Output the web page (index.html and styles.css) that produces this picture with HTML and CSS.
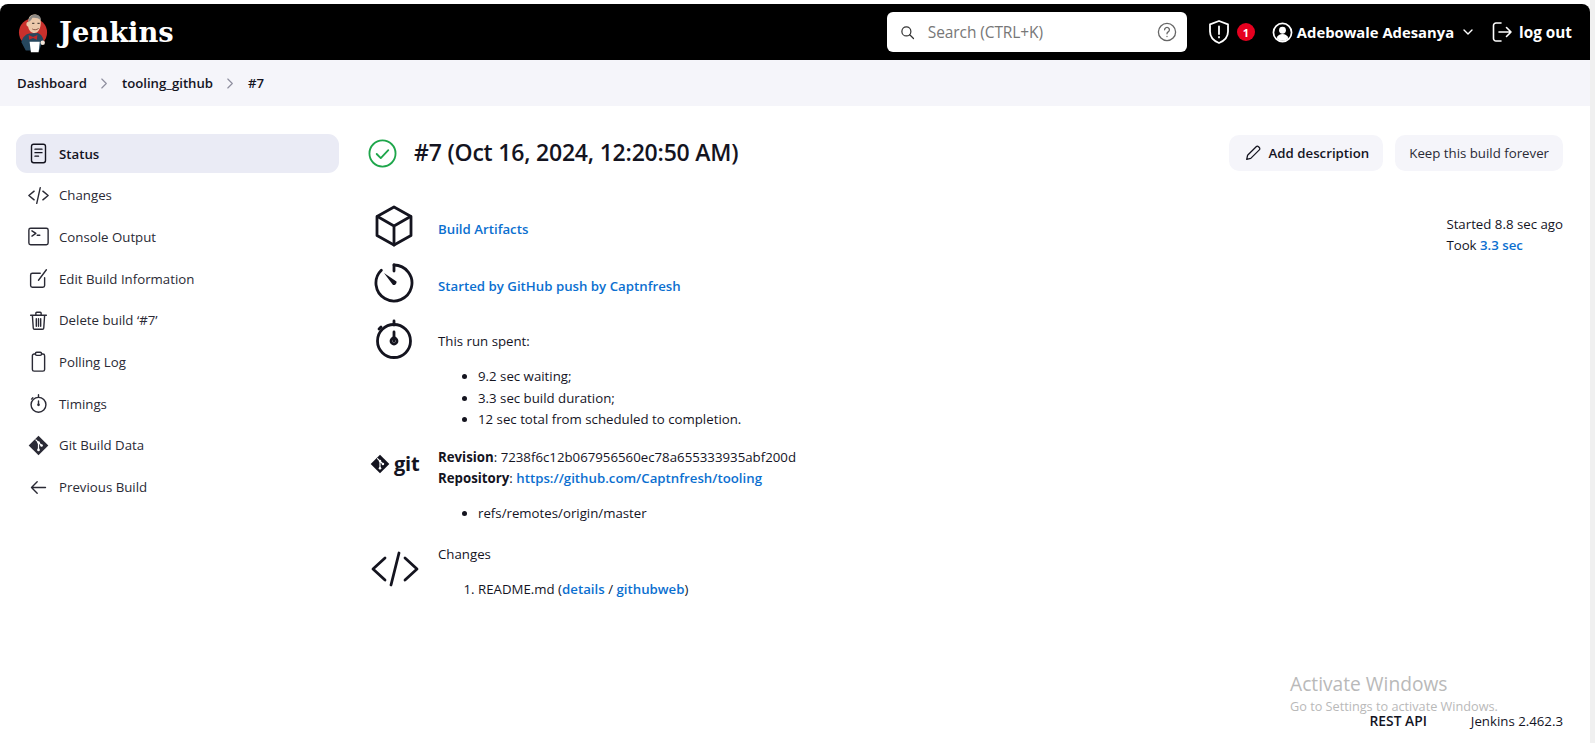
FILE: index.html
```html
<!DOCTYPE html>
<html lang="en">
<head>
<meta charset="utf-8">
<title>#7 - tooling_github - Jenkins</title>
<link rel="stylesheet" href="styles.css">
</head>
<body>
<div class="window">
  <header class="topbar">
    <a class="brand">
      <svg class="logo" viewBox="0 0 32 41" width="31" height="40">
        <circle cx="15.500" cy="20" r="14.500" fill="#c8302c"/>
        <path d="M3.500 30c1-5 4-8 8-9l9-.5c4 1.500 5.500 5 6 8.500l-2.500 3-2 6.500H8z" fill="#26475e"/>
        <path d="M11 5.500C12 2.500 15 1 18 1.500s5.500 3 5.500 7c0 1.500 0 2.500-.2 4-.5 4.500-3 8-6.300 8-3.500 0-6-3-6.500-6.500-1.200-.3-2-1.500-1.800-3 .2-1.300 1-2 2-2z" fill="#ecc9ab"/>
        <path d="M10.800 9.500C10.500 5 13.500 1 18 1.300c3.400.2 5.800 2.700 5.800 6-2.500-2.300-6-3-9-2.500-.5 1.500-1.500 3-4 4.700z" fill="#8d8a86"/>
        <path d="M15 10.500h1.500M20.500 10.500h1.500" stroke="#2c2420" stroke-width="1" fill="none"/>
        <path d="M15 16.500c1.500 1 4 1 6-.5" stroke="#7d4a38" stroke-width=".9" fill="none"/>
        <path d="M11 22.500l4.500 2 4.500-2-.5 5-4-1.800-4 1.800z" fill="#c22a2a"/>
        <path d="M12 29.500h10.500l-1.200 10.800h-8z" fill="#fff"/>
        <circle cx="25.500" cy="30.500" r="2.300" fill="#f4e6d8"/>
      </svg>
      <span class="wordmark">Jenkins</span>
    </a>
    <div class="search">
      <svg class="search-icon" viewBox="0 0 16 16" width="15" height="15"><circle cx="6.800" cy="6.800" r="4.800"/><path d="M10.400 10.400l4 4"/></svg>
      <span class="search-text">Search (CTRL+K)</span>
      <svg class="help" viewBox="0 0 20 20" width="20" height="20"><circle cx="10" cy="10" r="8.600"/><path d="M7.600 7.800a2.400 2.400 0 1 1 3.600 2.100c-.8.500-1.200 1-1.200 1.900"/><path d="M10 14.400v.2"/></svg>
    </div>
    <div class="actions">
      <div class="alert">
        <svg viewBox="0 0 24 26" width="24" height="26"><path d="M12 2l9 3.400v7.200c0 5.600-3.800 9.400-9 11.400-5.200-2-9-5.800-9-11.400V5.400z"/><path d="M12 7.500v7.500M12 18v.4"/></svg>
        <span class="badge">1</span>
      </div>
      <div class="user">
        <svg viewBox="0 0 22 22" width="21" height="21"><circle class="ring" cx="11" cy="11" r="9.500"/><circle class="fill" cx="11" cy="8.600" r="3.600"/><path class="fill" d="M4.800 17c1.200-3 3.400-4.300 6.200-4.300s5 1.300 6.200 4.300c-1.500 1.700-3.800 2.700-6.200 2.700S6.300 18.700 4.800 17z"/></svg>
        <span class="user-name">Adebowale Adesanya</span>
        <svg class="chev" viewBox="0 0 12 12" width="12" height="12"><path d="M2 4l4 4 4-4"/></svg>
      </div>
      <div class="logout">
        <svg viewBox="0 0 24 24" width="24" height="24"><path d="M11 3H6a2.500 2.500 0 0 0-2.500 2.500v13A2.500 2.500 0 0 0 6 21h5"/><path d="M9 12h12M16.500 7.500L21 12l-4.500 4.500"/></svg>
        <span>log out</span>
      </div>
    </div>
  </header>

  <nav class="crumbs">
    <span>Dashboard</span>
    <svg viewBox="0 0 10 14" width="9" height="13"><path d="M2 2l5 5-5 5"/></svg>
    <span>tooling_github</span>
    <svg viewBox="0 0 10 14" width="9" height="13"><path d="M2 2l5 5-5 5"/></svg>
    <span>#7</span>
  </nav>

  <div class="page">
    <aside class="side">
      <a class="task active">
        <svg viewBox="0 0 24 24"><rect x="4" y="1.500" width="16" height="21" rx="2.500"/><path d="M8 7h8M8 11h8M8 15h4"/></svg>
        <span>Status</span>
      </a>
      <a class="task">
        <svg viewBox="0 0 24 24"><path d="M7 7l-6 5 6 5M17 7l6 5-6 5M14 3l-4 18"/></svg>
        <span>Changes</span>
      </a>
      <a class="task">
        <svg viewBox="0 0 24 24"><rect x="1" y="2.500" width="22" height="19" rx="2"/><path d="M4.500 5.500l4.500 3-4.500 3M10.500 10.500h3"/></svg>
        <span>Console Output</span>
      </a>
      <a class="task">
        <svg viewBox="0 0 24 24"><path d="M14 6H5a2 2 0 0 0-2 2v12a2 2 0 0 0 2 2h12a2 2 0 0 0 2-2v-9"/><path d="M12 14L21 2"/></svg>
        <span>Edit Build Information</span>
      </a>
      <a class="task">
        <svg viewBox="0 0 24 24"><path d="M3 6h18M9 5V3.500a1 1 0 0 1 1-1h4a1 1 0 0 1 1 1V5M5 6l1 14.500a1.500 1.500 0 0 0 1.500 1.500h9a1.500 1.500 0 0 0 1.500-1.500L19 6M9.500 10v8.500M12 10v8.500M14.500 10v8.500"/></svg>
        <span>Delete build ‘#7’</span>
      </a>
      <a class="task">
        <svg viewBox="0 0 24 24"><path d="M8.500 3.500H7a2 2 0 0 0-2 2V21a2 2 0 0 0 2 2h10a2 2 0 0 0 2-2V5.500a2 2 0 0 0-2-2h-1.500"/><rect x="8.500" y="1.500" width="7" height="3.500" rx="1.500"/></svg>
        <span>Polling Log</span>
      </a>
      <a class="task">
        <svg viewBox="0 0 24 24"><circle cx="12" cy="13.500" r="8.500"/><path d="M12 2v3M12 9v4M5.500 5.500l-1.500 1.500"/><circle class="dot" cx="12" cy="13.500" r="1.500"/></svg>
        <span>Timings</span>
      </a>
      <a class="task">
        <svg viewBox="0 0 24 24"><path class="solid" d="M12 .8L23.200 12 12 23.200.8 12z"/><path class="cut" d="M9 5.500l6.500 6.500M12 8.500v9"/><circle class="hole" cx="12" cy="8.500" r="1.500"/><circle class="hole" cx="15.500" cy="12" r="1.500"/><circle class="hole" cx="12" cy="17" r="1.500"/></svg>
        <span>Git Build Data</span>
      </a>
      <a class="task">
        <svg viewBox="0 0 24 24"><path d="M20 12H4M10.500 5.500L4 12l6.500 6.500"/></svg>
        <span>Previous Build</span>
      </a>
    </aside>

    <main class="main">
      <div class="title-row">
        <svg class="ok" viewBox="0 0 30 30" width="29" height="29"><circle cx="15" cy="15" r="13.500"/><path d="M9 15.500l4.200 4.200L21 11.500"/></svg>
        <h1>#7 (Oct 16, 2024, 12:20:50 AM)</h1>
        <div class="buttons">
          <a class="btn strong">
            <svg viewBox="0 0 20 20" width="18" height="18"><path d="M3 17l1-4.500L13.500 3a1.800 1.800 0 0 1 2.600 0l.9.900a1.800 1.800 0 0 1 0 2.600L7.500 16z"/></svg>
            <span>Add description</span>
          </a>
          <a class="btn">Keep this build forever</a>
        </div>
      </div>

      <div class="content">
        <div class="blocks">
          <section class="block b-artifacts">
            <svg class="big" viewBox="0 0 40 42"><path d="M20 2l17 9.500v19L20 40 3 30.500v-19z"/><path d="M3.500 11.500L20 21l16.500-9.500M20 21v19"/></svg>
            <a class="link-strong">Build Artifacts</a>
          </section>
          <section class="block b-started">
            <svg class="big" viewBox="0 0 40 42"><path d="M20 3a18 18 0 1 1-12.700 5.200"/><path d="M20 3v6"/><path class="solid" d="M10 11l12.500 8.500a3 3 0 0 1-3.500 3.500z"/></svg>
            <a class="link-strong">Started by GitHub push by Captnfresh</a>
          </section>
          <section class="block b-timing">
            <svg class="big" viewBox="0 0 40 42"><circle cx="20" cy="23" r="16.500"/><path d="M20 3v4M20 14v9M7 9L5 11"/><circle cx="20" cy="23" r="3"/></svg>
            <div class="body">
              <p>This run spent:</p>
              <ul>
                <li>9.2 sec waiting;</li>
                <li>3.3 sec build duration;</li>
                <li>12 sec total from scheduled to completion.</li>
              </ul>
            </div>
          </section>
          <section class="block b-git">
            <div class="gitlogo">
              <svg viewBox="0 0 24 24" width="20" height="20"><path class="solid" d="M12 .8L23.200 12 12 23.200.8 12z"/><path class="cut" d="M9 5.500l6.500 6.500M12 8.500v9"/><circle class="hole" cx="12" cy="8.500" r="1.500"/><circle class="hole" cx="15.500" cy="12" r="1.500"/><circle class="hole" cx="12" cy="17" r="1.500"/></svg>
              <span>git</span>
            </div>
            <div class="body">
              <p><b>Revision</b>: 7238f6c12b067956560ec78a655333935abf200d</p>
              <p><b>Repository</b>: <a class="link-strong">https://github.com/Captnfresh/tooling</a></p>
              <ul><li>refs/remotes/origin/master</li></ul>
            </div>
          </section>
          <section class="block b-changes">
            <svg class="big" viewBox="0 0 48 38"><path d="M14 8L2 19l12 11M34 8l12 11-12 11M28 3l-8 32"/></svg>
            <div class="body">
              <p>Changes</p>
              <ol><li>README.md (<a class="link-strong">details</a> / <a class="link-strong">githubweb</a>)</li></ol>
            </div>
          </section>
        </div>
        <div class="meta">
          <p>Started 8.8 sec ago</p>
          <p>Took <a class="link-strong">3.3 sec</a></p>
        </div>
      </div>
    </main>
  </div>

  <footer class="foot">
    <span class="rest">REST API</span>
    <span>Jenkins 2.462.3</span>
  </footer>
  <div class="activate">
    <div class="a1">Activate Windows</div>
    <div class="a2">Go to Settings to activate Windows.</div>
  </div>
</div>
</body>
</html>
```

FILE: styles.css
```css
* { box-sizing: border-box; }
html, body { margin: 0; height: 100%; }
body {
  background: #fff;
  font-family: "Open Sans", "Liberation Sans", sans-serif;
  font-size: 13.250px;
  color: #14141f;
  overflow: hidden;
}
a { color: inherit; text-decoration: none; }
p { margin: 0; }
svg { fill: none; stroke: currentColor; stroke-linecap: round; stroke-linejoin: round; flex: none; }
.solid { fill: currentColor; stroke: none; }
.cut { stroke: #fff; stroke-width: 1.4; }
.hole { fill: #fff; stroke: none; }

.window {
  position: relative;
  height: 743px;
  padding-top: 4px;
  padding-right: 5px;
  display: flex;
  flex-direction: column;
  background: linear-gradient(#f0f0f0, #f0f0f0) right / 5px 100% no-repeat, #fff;
}

.topbar {
  height: 56px;
  background: #000;
  border-radius: 8px 8px 0 0;
  display: flex;
  align-items: center;
  color: #fff;
  padding: 0 18px 0 18px;
}
.brand { display: flex; align-items: center; gap: 10px; }
.logo { stroke: none; margin-top: 1px; }
.wordmark {
  font-family: "DejaVu Serif", serif;
  font-size: 27.300px;
  font-weight: 700;
}
.search {
  margin-left: auto;
  width: 300px;
  height: 40px;
  background: #fff;
  border-radius: 6px;
  display: flex;
  align-items: center;
  padding: 0 10px 0 13px;
}
.search-icon { stroke: #333; stroke-width: 1.3; }
.search-text { margin-left: 13px; font-size: 15.500px; color: #777; flex: 1; letter-spacing: -.1px; }
.help { stroke: #666; stroke-width: 1.3; }
.actions { display: flex; align-items: center; margin-left: 20px; font-weight: 700; }
.alert { display: flex; align-items: center; gap: 6px; }
.alert svg { stroke-width: 1.8; }
.badge {
  width: 18px; height: 18px; border-radius: 50%;
  background: #e6001f; color: #fff; font-size: 11px;
  display: flex; align-items: center; justify-content: center;
}
.user { display: flex; align-items: center; gap: 4px; margin-left: 17px; }
.user .ring { stroke-width: 1.8; }
.user .fill { fill: #fff; stroke: none; }
.user-name { font-size: 14.800px; }
.chev { margin-left: 4px; stroke-width: 1.4; }
.logout { display: flex; align-items: center; gap: 5px; margin-left: 16px; font-size: 15.300px; }
.logout svg { stroke-width: 1.6; }

.crumbs {
  height: 46px;
  background: #f5f5fa;
  display: flex;
  align-items: center;
  padding-left: 17px;
  font-weight: 600;
  gap: 13px;
  font-size: 13.200px;
}
.crumbs svg { stroke: #8f8f9f; stroke-width: 1.3; }

.page { display: flex; flex: 1; padding: 28px 27px 0 16px; }
.side { width: 323px; flex: none; display: flex; flex-direction: column; gap: 2.700px; }
.task {
  height: 39px;
  display: flex;
  align-items: center;
  gap: 10px;
  padding-left: 12px;
  border-radius: 11px;
  color: #2a2a35;
}
.task.active { background: #eaebf5; color: #14141f; font-weight: 600; }
.task svg { width: 21px; height: 21px; stroke-width: 1.6; }
.task .dot { fill: currentColor; stroke: none; }

.main { flex: 1; margin-left: 29px; display: flex; flex-direction: column; }
.title-row { display: flex; align-items: center; height: 38px; }
.ok { stroke: #1ea64b; stroke-width: 1.900; margin-right: 17px; }
h1 { margin: 0 0 2px; font-size: 23px; font-weight: 600; letter-spacing: -.2px; }
.buttons { margin-left: auto; display: flex; gap: 12px; }
.btn {
  height: 36px;
  padding: 0 14px;
  background: #f5f5fa;
  border-radius: 10px;
  display: flex;
  align-items: center;
  gap: 7px;
  color: #2a2a35;
}
.btn.strong { font-weight: 600; color: #14141f; padding: 0 14px 0 15px; }
.btn svg { stroke-width: 1.4; }

.content { display: flex; justify-content: space-between; margin-top: 24px; }
.blocks { display: flex; flex-direction: column; }
.block { display: flex; align-items: flex-start; }
.big { width: 40px; height: 42px; stroke-width: 2.800; margin: 0 24px 0 6px; flex: none; }
.link-strong { color: #0b6fd0; font-weight: 600; }
.b-artifacts { height: 58px; margin-top: 1px; align-items: center; }
.b-started { height: 55px; align-items: center; }
.b-artifacts a { margin-top: 6px; }
.b-started a { margin-top: 7px; }
.b-timing { height: 124px; margin-top: 13px; }
.b-timing .big { margin-top: -5px; }
.b-timing .body { padding-top: 8px; }
ul, ol { margin: 14px 0 0; padding-left: 40px; line-height: 21.500px; }
.body { line-height: 21px; }
.b-git { height: 97px; }
.gitlogo { width: 70px; display: flex; align-items: center; gap: 4px; padding-left: 2px; margin-top: 3px; flex: none; }
.gitlogo span { font-weight: 700; font-size: 20px; line-height: 28px; letter-spacing: -.2px; }
.b-changes .big { margin: 6px 19px 0 3px; width: 48px; height: 38px; stroke-width: 2.800; }
.meta { line-height: 21px; padding-top: 18px; white-space: nowrap; }

.foot {
  position: absolute;
  right: 32px;
  bottom: 13px;
  display: flex;
  gap: 44px;
  line-height: 18px;
}
.rest { font-weight: 600; font-size: 13.800px; }
.activate {
  position: absolute;
  left: 1290px;
  top: 672px;
  color: #b9b9b9;
  pointer-events: none;
}
.a1 { font-size: 19.200px; line-height: 24px; }
.a2 { font-size: 12.700px; line-height: 20px; }
```
